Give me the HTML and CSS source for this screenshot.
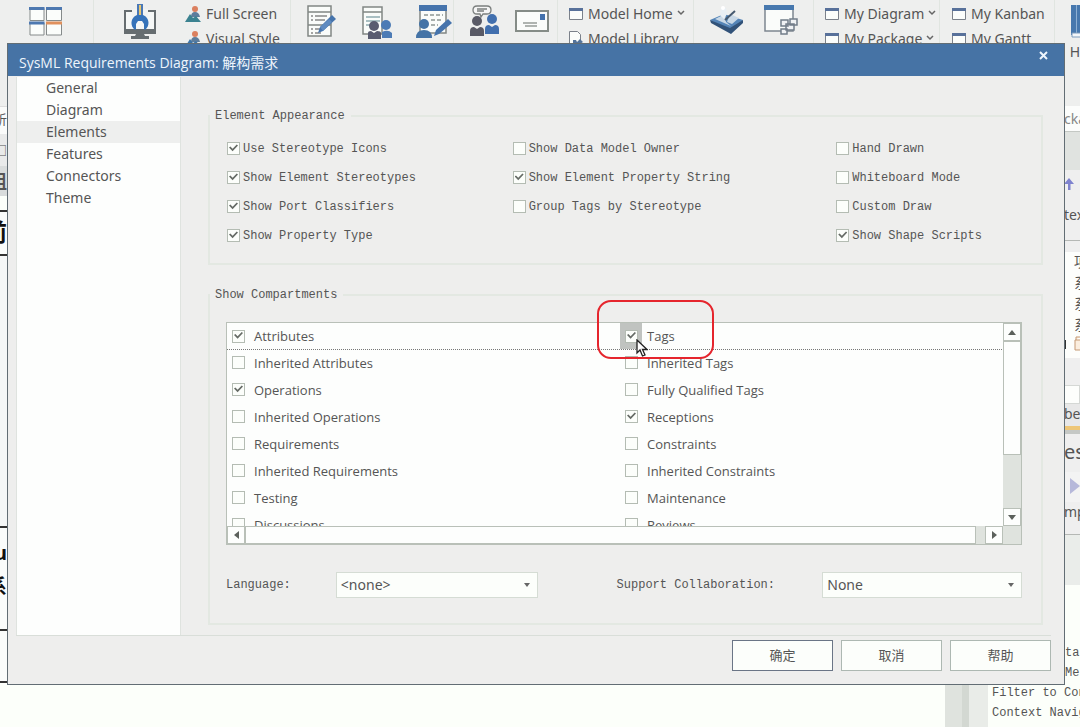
FILE: index.html
```html
<!DOCTYPE html>
<html lang="zh-CN">
<head>
<meta charset="utf-8">
<title>SysML Requirements Diagram: 解构需求</title>
<link rel="stylesheet" href="styles.css">
</head>
<body>
<div class="app">
  <header class="ribbon">
    <div class="group g-layout">
      <svg width="34" height="30" viewBox="0 0 34 30"><g fill="#fbfdfb" stroke="#858a8a"><path d="M1 1.500h14v12H1zM17.500 1.500h15v12h-15zM1 16h14v12H1zM17.500 16h15v12h-15z"/></g><path d="M0 0h15.500v3H0zM17 0h16v3H17zM0 14.500h15.500v3H0z" fill="#4d78b0"/><path d="M17 14.500h16v3H17z" fill="#e0905c"/></svg>
    </div>
    <div class="group g-tools">
      <svg width="34" height="38" viewBox="0 0 34 38"><path d="M2 7h30v21H2z" fill="#f5f7f6" stroke="#666d70" stroke-width="2"/><path d="M1 25h32v5H1z" fill="#666d70"/><path d="M13 30h8l1 2h4v3H8v-3h4z" fill="#666d70"/><path d="M9 5h16v8H9z" fill="#f1f3f2"/><path d="M14 0h6v13h-6z" fill="#4978b6"/><path d="M16 1h2v10h-2z" fill="#e6c66f"/><path d="M14 11c-7 3-7 11-2 15l1-1v-5l2-3h4l2 3v5l1 1c5-4 5-12-2-15z" fill="#3673b9"/></svg>
      <div class="links">
        <a href="#"><svg width="16" height="16" viewBox="0 0 16 16"><circle cx="10" cy="3" r="3" fill="#db805f"/><path d="M6 11q0-5 4-5t5 5z" fill="#5d7d9c"/><path d="M0 16l5-8 3 4 3-2 5 6z" fill="#3b8290"/></svg>Full Screen</a>
        <a href="#"><svg width="16" height="16" viewBox="0 0 16 16"><circle cx="10" cy="3" r="3" fill="#db805f"/><path d="M6 11q0-5 4-5t5 5z" fill="#5d7d9c"/><path d="M0 16l5-8 3 4 3-2 5 6z" fill="#3c75a9"/></svg>Visual Style</a>
      </div>
    </div>
    <div class="group g-docs">
      <svg width="32" height="34" viewBox="0 0 32 34"><path d="M2 1h23v30H2zM2 7h23M2 20h23" fill="#fafcfa" stroke="#818784" stroke-width="1.500"/><path d="M5 11h2M9 11h12M5 15h2M9 15h10M5 24h2M9 24h5M5 28h2M9 28h6" stroke="#888" stroke-width="1.500"/><path d="M12 28l2-6 12-12 4 4-13 12z" fill="#4674ac"/><path d="M14 22l3 4 9-9-3-3z" fill="#5f8bc0"/></svg>
      <svg width="32" height="34" viewBox="0 0 32 34"><path d="M2 2h19v27H2zM2 7h19" fill="#fafcfa" stroke="#818784" stroke-width="1.500"/><path d="M5 12h14M5 16h14M5 20h4" stroke="#8faab0" stroke-width="1.500"/><circle cx="13" cy="21" r="5" fill="#595c70"/><path d="M7 34v-6q0-2 3-2l3 2 3-2q4 0 4 2v6z" fill="#595c70"/><circle cx="25" cy="20" r="5" fill="#4c7bb5"/><path d="M21 33v-6q6-3 10 1v5z" fill="#4c7bb5"/></svg>
      <svg width="36" height="34" viewBox="0 0 36 34"><path d="M4 1h26v27H4z" fill="#fafcfa" stroke="#818784" stroke-width="1.500"/><path d="M3 0h28v6H3z" fill="#4674ac"/><path d="M8 10h19M15 15h10M15 20h7" stroke="#8d9694" stroke-width="1.500" stroke-dasharray="4 2"/><circle cx="8" cy="19" r="5" fill="#4473a6"/><path d="M0 33q0-8 8-8t8 8z" fill="#4473a6"/><path d="M18 31l2-6 12-11 4 4-13 11z" fill="#4674ac"/></svg>
    </div>
    <div class="group g-talk">
      <svg width="32" height="32" viewBox="0 0 32 32"><path d="M8 1h10q4 0 4 4t-4 4h-4l-2 3-1-3H8q-4 0-4-4t4-4zM8 4h10M8 6h7" fill="#f5f5f5" stroke="#7b7f7e" stroke-width="1.300"/><circle cx="8" cy="16" r="5" fill="#595a66"/><path d="M1 31v-5q0-4 4-4l3 2 3-2q4 0 4 4v5z" fill="#595a66"/><circle cx="23" cy="14" r="5" fill="#416fae"/><path d="M16 29v-5q0-4 4-4l3 2 3-2q4 0 4 4v5z" fill="#416fae"/></svg>
      <svg width="34" height="22" viewBox="0 0 34 22"><path d="M1 1h32v20H1z" fill="#fafcfa" stroke="#858c87" stroke-width="2"/><path d="M25 4h5v6h-5z" fill="#4472ad"/><path d="M8 13h14M10 16h12" stroke="#979c98" stroke-width="1.500"/></svg>
    </div>
    <div class="group g-home">
      <div class="links">
        <a href="#"><svg class="win" width="14" height="12" viewBox="0 0 14 12"><path d="M.5.5h13v11H.5z" fill="#fbfdfb" stroke="#7b818a"/><path d="M0 0h14v3H0z" fill="#58719a"/></svg>Model Home<svg class="chev" width="8" height="6" viewBox="0 0 8 6"><path d="M1 1l3 3 3-3" fill="none" stroke="#666" stroke-width="1.500"/></svg></a>
        <a href="#"><svg class="win" width="14" height="16" viewBox="0 0 14 16"><path d="M.5.500h8l3 3v12H.5z" fill="#fbfdfb" stroke="#7b818a"/><path d="M4 14V9h3l1 2 3-3 3 3-3 2v1z" fill="#53739b"/></svg>Model Library</a>
      </div>
    </div>
    <div class="group g-book">
      <svg width="34" height="30" viewBox="0 0 34 30"><path d="M0 15l14-6 19 6-12 12z" fill="#5484b7"/><path d="M0 15l20 8 13-8v3L21 29 1 18z" fill="#315279"/><path d="M5 14l10-5 1 8 5 4zM20 9l9 4-7 6-5-2z" fill="#c9d8e6"/><path d="M15 15L25 6" stroke="#46596f" stroke-width="2"/><path d="M11 3h5l1 6-3 5-4-4z" fill="#e9eff4"/><circle cx="13" cy="3" r="2" fill="#fff"/></svg>
      <svg width="34" height="30" viewBox="0 0 34 30"><path d="M1 1h28v25H1z" fill="#fafcfa" stroke="#7e8690" stroke-width="1.500"/><path d="M0 0h30v5H0z" fill="#4778ae"/><g fill="#f0f2f4" stroke="#727d89" stroke-width="1.500"><path d="M17 15h7v6h-7zM26 14h7v6h-7zM22 19h8v6h-8zM17 24h6v5h-6z"/></g></svg>
    </div>
    <div class="group g-my">
      <div class="links">
        <a href="#"><svg class="win" width="14" height="12" viewBox="0 0 14 12"><path d="M.5.5h13v11H.5z" fill="#fbfdfb" stroke="#7b818a"/><path d="M0 0h14v3H0z" fill="#58719a"/></svg>My Diagram<svg class="chev" width="8" height="6" viewBox="0 0 8 6"><path d="M1 1l3 3 3-3" fill="none" stroke="#666" stroke-width="1.500"/></svg></a>
        <a href="#"><svg class="win" width="14" height="12" viewBox="0 0 14 12"><path d="M.5.5h13v11H.5z" fill="#fbfdfb" stroke="#7b818a"/><path d="M0 0h14v3H0z" fill="#58719a"/></svg>My Package<svg class="chev" width="8" height="6" viewBox="0 0 8 6"><path d="M1 1l3 3 3-3" fill="none" stroke="#666" stroke-width="1.500"/></svg></a>
      </div>
    </div>
    <div class="group g-kanban">
      <div class="links">
        <a href="#"><svg class="win" width="14" height="12" viewBox="0 0 14 12"><path d="M.5.5h13v11H.5z" fill="#fbfdfb" stroke="#7b818a"/><path d="M0 0h14v3H0z" fill="#58719a"/></svg>My Kanban</a>
        <a href="#"><svg class="win" width="14" height="12" viewBox="0 0 14 12"><path d="M.5.5h13v11H.5z" fill="#fbfdfb" stroke="#7b818a"/><path d="M0 0h14v3H0z" fill="#58719a"/></svg>My Gantt</a>
      </div>
    </div>
    <div class="group g-help">
      <svg width="9" height="33" viewBox="0 0 9 33"><path d="M0 0h9v30H0z" fill="#4778ae"/><path d="M5.500 0v28" stroke="#8db0d4"/><path d="M1 28h9v4H1z" fill="#f4f7fa" stroke="#7c9cbd"/></svg>
      <span>H</span>
    </div>
  </header>

  <main class="workspace">
    <section class="canvas">
      <div class="strip tabs">析</div>
      <div class="strip bar">□</div>
      <div class="strip head">组</div>
      <div class="strip cell c1">前</div>
      <div class="strip cell c2"></div>
      <div class="strip cell c3"><span>u</span><span>系</span></div>
      <div class="strip cell c4"></div>
    </section>
    <div class="gutter"><i></i><i></i></div>
    <aside class="dock">
      <div class="frag search">cka</div>
      <div class="frag grey"></div>
      <div class="frag arrow"><svg width="10" height="12" viewBox="0 0 10 12"><path d="M4 12V6H0l5-6 5 6H6.500v6z" fill="#7f83cf"/></svg></div>
      <div class="frag text">tex</div>
      <div class="frag gap"></div>
      <div class="frag tree"><span>项</span><span>系</span><span>系</span><span>系</span><svg width="16" height="16" viewBox="0 0 16 16"><path d="M0 4h2v9H0z" fill="#333"/><path d="M12 4V1h4M11 4h6v10h-6z" fill="#fbeedf" stroke="#c59975"/></svg></div>
      <div class="frag gap2"></div>
      <div class="frag white"></div>
      <div class="frag tab">be</div>
      <div class="frag big">es</div>
      <div class="frag play"><svg width="10" height="16" viewBox="0 0 10 16"><path d="M0 0l10 8-10 8z" fill="#b6b8da"/></svg></div>
      <div class="frag imp">mp</div>
      <div class="frag gap3"></div>
      <div class="frag start"><span>tar</span><span>Me</span></div>
      <div class="notes"><span>Filter to Con</span><span>Context Navig</span><span>Use the up</span></div>
    </aside>
  </main>
</div>

<form class="dialog" role="dialog" aria-labelledby="dlg-title">
  <div class="titlebar">
    <h1 id="dlg-title">SysML Requirements Diagram: 解构需求</h1>
    <button type="button" class="close" aria-label="Close"><svg width="9" height="9" viewBox="0 0 9 9"><path d="M1 1l7 7M8 1L1 8" stroke="#eef5fc" stroke-width="2"/></svg></button>
  </div>
  <div class="content">
    <nav class="side">
      <a href="#">General</a>
      <a href="#">Diagram</a>
      <a href="#" class="active" aria-current="page">Elements</a>
      <a href="#">Features</a>
      <a href="#">Connectors</a>
      <a href="#">Theme</a>
    </nav>
    <div class="pages">
      <fieldset class="box appearance">
        <legend>Element Appearance</legend>
        <div class="options">
          <div class="col">
            <label><input type="checkbox" checked>Use Stereotype Icons</label>
            <label><input type="checkbox" checked>Show Element Stereotypes</label>
            <label><input type="checkbox" checked>Show Port Classifiers</label>
            <label><input type="checkbox" checked>Show Property Type</label>
          </div>
          <div class="col">
            <label><input type="checkbox">Show Data Model Owner</label>
            <label><input type="checkbox" checked>Show Element Property String</label>
            <label><input type="checkbox">Group Tags by Stereotype</label>
          </div>
          <div class="col">
            <label><input type="checkbox">Hand Drawn</label>
            <label><input type="checkbox">Whiteboard Mode</label>
            <label><input type="checkbox">Custom Draw</label>
            <label><input type="checkbox" checked>Show Shape Scripts</label>
          </div>
        </div>
      </fieldset>

      <fieldset class="box compartments">
        <legend>Show Compartments</legend>
        <div class="list">
          <div class="view">
            <div class="row focus"><label><input type="checkbox" checked>Attributes</label><label class="hot"><input type="checkbox" checked>Tags</label></div>
            <div class="row"><label><input type="checkbox">Inherited Attributes</label><label><input type="checkbox">Inherited Tags</label></div>
            <div class="row"><label><input type="checkbox" checked>Operations</label><label><input type="checkbox">Fully Qualified Tags</label></div>
            <div class="row"><label><input type="checkbox">Inherited Operations</label><label><input type="checkbox" checked>Receptions</label></div>
            <div class="row"><label><input type="checkbox">Requirements</label><label><input type="checkbox">Constraints</label></div>
            <div class="row"><label><input type="checkbox">Inherited Requirements</label><label><input type="checkbox">Inherited Constraints</label></div>
            <div class="row"><label><input type="checkbox">Testing</label><label><input type="checkbox">Maintenance</label></div>
            <div class="row"><label><input type="checkbox">Discussions</label><label><input type="checkbox">Reviews</label></div>
          </div>
          <div class="vbar">
            <button type="button" aria-label="Scroll up"><svg width="8" height="5" viewBox="0 0 8 5"><path d="M0 5l4-5 4 5z"/></svg></button>
            <div class="thumb"></div>
            <div class="track"></div>
            <button type="button" aria-label="Scroll down"><svg width="8" height="5" viewBox="0 0 8 5"><path d="M0 0h8L4 5z"/></svg></button>
          </div>
          <div class="hbar">
            <button type="button" aria-label="Scroll left"><svg width="5" height="8" viewBox="0 0 5 8"><path d="M5 0v8L0 4z"/></svg></button>
            <div class="thumb"></div>
            <div class="track"></div>
            <button type="button" aria-label="Scroll right"><svg width="5" height="8" viewBox="0 0 5 8"><path d="M0 0l5 4-5 4z"/></svg></button>
          </div>
          <div class="callout"></div>
          <svg class="pointer" width="12" height="18" viewBox="0 0 12 18"><path d="M1 1v13l3-3 2.500 6 2.500-1-2.500-5.500H11z" fill="#fff" stroke="#222" stroke-width="1.300"/></svg>
        </div>
        <div class="picks">
          <label for="lang">Language:</label>
          <span class="pick"><select id="lang"><option>&lt;none&gt;</option></select><svg width="6" height="4" viewBox="0 0 6 4"><path d="M0 0h6L3 4z"/></svg></span>
          <label for="collab" class="second">Support Collaboration:</label>
          <span class="pick"><select id="collab"><option>None</option></select><svg width="6" height="4" viewBox="0 0 6 4"><path d="M0 0h6L3 4z"/></svg></span>
        </div>
      </fieldset>
    </div>
  </div>
  <div class="actions">
    <button type="button" class="primary">确定</button>
    <button type="button">取消</button>
    <button type="button">帮助</button>
  </div>
</form>
</body>
</html>
```
FILE: styles.css
```css
* { box-sizing: border-box; }

html, body { height: 100%; }

body {
  margin: 0;
  overflow: hidden;
  position: relative;
  background: #fcfffa;
  color: #555;
  font: 13px/20px "Noto Sans", "Noto Sans CJK SC", sans-serif;
}

button, select, input { font: inherit; color: inherit; margin: 0; padding: 0; }
a { color: inherit; text-decoration: none; }
svg { flex: none; display: block; }

/* Application behind the dialog */
.app { height: 100%; display: flex; flex-direction: column; overflow: hidden; }

.ribbon {
  flex: none;
  height: 106px;
  display: flex;
  background: #eeefee;
  font-size: 14px;
}
.group {
  flex: none;
  display: flex;
  align-items: flex-start;
  padding-top: 5px;
  border-right: 1px solid #e0e5e0;
}
.links { display: flex; flex-direction: column; gap: 5px; margin-top: -1px; }
.links a { display: flex; align-items: center; height: 20px; gap: 5px; white-space: nowrap; }
.chev { margin-left: -1px; margin-top: -3px; }
.g-layout { width: 94px; padding-left: 29px; padding-top: 7px; }
.g-tools { width: 197px; padding-left: 29px; gap: 28px; padding-top: 4px; }
.g-tools .links { margin-top: 0; }
.g-docs { width: 163px; padding-left: 15px; gap: 23px; }
.g-talk { width: 104px; padding-left: 15px; gap: 14px; }
.g-talk svg + svg { margin-top: 5px; }
.g-home { width: 136px; padding-left: 11px; }
.g-book { width: 120px; padding-left: 16px; gap: 20px; }
.g-my { width: 126px; padding-left: 11px; }
.g-kanban { width: 115px; padding-left: 12px; }
.g-help { flex: 1; flex-direction: column; align-items: flex-end; gap: 4px; border: 0; }

.workspace { flex: 1; display: flex; min-height: 0; }
.canvas { flex: 1; display: flex; flex-direction: column; }
.strip { width: 7px; overflow: hidden; display: flex; justify-content: flex-end; flex: none; }
.tabs { height: 28px; background: #fafbfa; border-top: 1px solid #ddd; line-height: 24px; }
.bar { height: 32px; background: #e9eaea; line-height: 32px; }
.head { height: 30px; background: #d9dcdc; line-height: 30px; font-size: 18px; font-weight: 700; }
.cell { color: #111; border-bottom: 2px solid #333; background: #fafcfb; font-weight: 700; }
.c1 { height: 46px; border-top: 2px solid #333; margin-top: 14px; font-size: 24px; line-height: 40px; }
.c2 { height: 272px; background: #f5f7f7; }
.c3 { height: 103px; flex-direction: column; justify-content: flex-start; align-items: flex-end; font-size: 20px; line-height: 34px; padding-top: 8px; }
.c4 { height: 52px; }

.gutter { width: 43px; flex: none; display: flex; background: #e9ece8; }
.gutter i { width: 17px; background: #dfe3de; }
.gutter i + i { width: 7px; background: #d3d8d2; }

.dock { width: 92px; flex: none; display: flex; flex-direction: column; background: #efefef; font-size: 14px; }
.frag { flex: none; padding-left: 76px; overflow: hidden; white-space: nowrap; }
.search { height: 26px; background: #fcfdfc; border-bottom: 1px solid #c4c8c4; line-height: 26px; color: #888; }
.grey { height: 38px; background: #e0e3e0; }
.arrow { height: 35px; padding-top: 8px; }
.text { height: 36px; border-bottom: 1px solid #b5b8b5; line-height: 20px; }
.gap { height: 11px; }
.tree { height: 106px; background: #fdfefc; display: flex; flex-direction: column; line-height: 20px; }
.tree span { padding-left: 10px; height: 21px; }
.gap2 { height: 27px; }
.white { height: 19px; background: #fdfefc; border: 1px solid #d5d8d5; }
.tab { height: 26px; border-bottom: 4px solid #eec677; background: #e8e8e8; line-height: 20px; }
.big { height: 42px; border-top: 4px solid #c5c8c5; font-size: 20px; line-height: 36px; }
.play { height: 30px; background: #f3f3f3; padding-left: 82px; padding-top: 6px; }
.imp { height: 33px; border-bottom: 1px solid #b5b8b5; line-height: 20px; }
.gap3 { height: 50px; background: #eaedea; }
.start { height: 98px; background: #fcfffa; padding-left: 77px; }
.start, .notes { display: flex; flex-direction: column; font: 12px/20px "Liberation Mono", monospace; }
.start { justify-content: flex-end; }
.notes { flex: 1; background: #fcfffa; overflow: hidden; white-space: nowrap; padding-left: 4px; }

/* Dialog window */
.dialog {
  position: absolute;
  top: 43px;
  left: 7px;
  right: 15px;
  margin: 0;
  display: flex;
  flex-direction: column;
  background: #eeeeed;
  border: 1px solid #626d74;
}
.titlebar {
  display: flex;
  justify-content: space-between;
  height: 32px;
  padding: 3px 16px 0 11px;
  background: #4673a5;
  color: #eef5fc;
}
.titlebar h1 { margin: 0; font: 14px/32px "Open Sans", "Noto Sans CJK SC", sans-serif; white-space: nowrap; }
.close { height: 17px; background: none; border: 0; display: flex; align-items: center; }

.content {
  display: flex;
  gap: 27px;
  margin: 1px 13px 0 8px;
  border-bottom: 1px solid #d9ded9;
}
.side {
  width: 165px;
  flex: none;
  display: flex;
  flex-direction: column;
  background: #fdfefd;
  border-left: 1px solid #dfe3df;
  border-right: 1px solid #dfe3df;
  font-size: 14px;
}
.side a { padding-left: 29px; height: 22px; line-height: 22px; }
.side .active { background: #eeefee; }

.pages {
  flex: 1;
  display: flex;
  flex-direction: column;
  gap: 20px;
  padding: 29px 8px 10px 0;
  font: 12px/20px "Liberation Mono", monospace;
}
.box { margin: 0; min-width: 0; padding: 0; border: 2px solid #e3e8e2; }
.box legend { padding: 0 6px 0 5px; line-height: 20px; }

.options {
  display: grid;
  grid-template-columns: 286fr 324fr 205fr;
  padding: 8px 0 13px 17px;
}
.col { display: flex; flex-direction: column; }
.col label { display: flex; align-items: center; gap: 3px; height: 29px; white-space: nowrap; }

input[type="checkbox"] {
  appearance: none;
  flex: none;
  width: 13px;
  height: 13px;
  display: flex;
  justify-content: center;
  background: #fcfefb;
  border: 1px solid #b4bcb3;
}
input[type="checkbox"]:checked::after {
  content: "";
  width: 9px;
  height: 8px;
  margin-top: 1px;
  background: #666b66;
  clip-path: polygon(0 45%, 15% 30%, 40% 58%, 86% 6%, 100% 20%, 40% 92%);
}

.list {
  position: relative;
  display: grid;
  grid-template-columns: 1fr 18px;
  grid-template-rows: 203px 18px;
  margin: 17px 19px 0 16px;
  border: 1px solid #b9c0b8;
  background: #dfe3de;
}
.view { overflow: hidden; background: #fdfefd; font: 13px/20px "Open Sans", sans-serif; }
.row { display: grid; grid-template-columns: 393fr 383fr; height: 27px; }
.focus { height: 26px; outline: 1px dotted #777; }
.row label { display: flex; align-items: center; gap: 9px; padding-left: 5px; white-space: nowrap; }
.hot { background: linear-gradient(90deg, #c0c3c0 22px, transparent 22px); }

.vbar { display: flex; flex-direction: column; }
.hbar { display: flex; }
.list button {
  width: 18px;
  height: 18px;
  flex: none;
  display: flex;
  align-items: center;
  justify-content: center;
  background: #fdfefd;
  border: 1px solid #b9c0b8;
  fill: #5c615c;
}
.thumb { background: #fdfefd; border: 1px solid #b9c0b8; }
.vbar .thumb { flex: 113; }
.vbar .track { flex: 54; }
.hbar .thumb { flex: 730; }
.hbar .track { flex: 9; }

.callout {
  position: absolute;
  left: 370px;
  top: -23px;
  width: 117px;
  height: 59px;
  border: 2px solid #e5252d;
  border-radius: 14px;
}
.pointer { position: absolute; left: 409px; top: 16px; }

.picks {
  display: grid;
  grid-template-columns: 110fr 202fr 285fr 200fr;
  align-items: center;
  margin: 27px 19px 25px 16px;
}
.second { padding-left: 79px; white-space: nowrap; }
.pick { position: relative; display: flex; }
.pick select {
  appearance: none;
  width: 100%;
  height: 26px;
  padding: 0 20px 0 4px;
  background: #fcfefb;
  border: 1px solid #d5dcd4;
  border-radius: 0;
  font: 14px/20px "Noto Sans", sans-serif;
}
.pick svg { position: absolute; right: 8px; top: 11px; fill: #666; }

.actions { display: flex; justify-content: flex-end; gap: 8px; padding: 4px 13px 13px; }
.actions button {
  width: 101px;
  height: 31px;
  padding-bottom: 2px;
  background: #fcfefb;
  border: 1px solid #adb8b2;
  font-family: "Noto Sans CJK SC", sans-serif;
}
.actions .primary { border-color: #6a7586; }
```
